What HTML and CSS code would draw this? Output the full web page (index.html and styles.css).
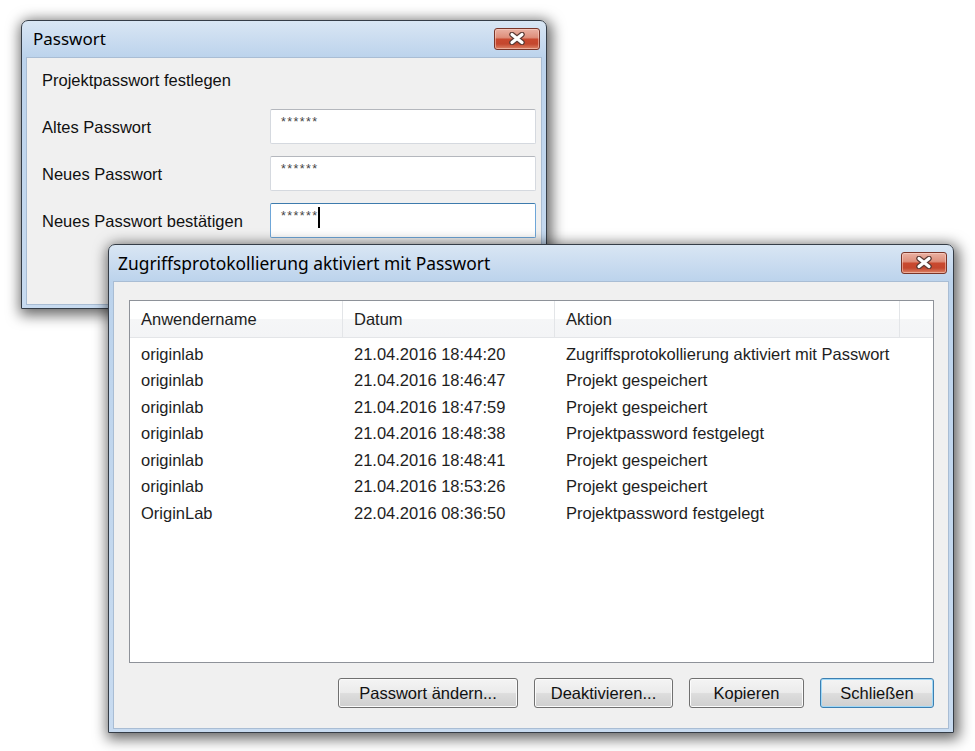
FILE: index.html
```html
<!DOCTYPE html>
<html lang="de">
<head>
<meta charset="utf-8">
<title>Passwort</title>
<link rel="stylesheet" href="styles.css">
</head>
<body>
<div class="desktop">
  <section class="window win-pw">
    <header class="titlebar">
      <span class="title">Passwort</span>
      <button class="close" aria-label="Schließen">
        <svg width="20" height="13" viewBox="0 0 20 13"><path d="M5 2.5 L15 10.5 M15 2.5 L5 10.5" stroke="#5b3a34" stroke-width="5.5" stroke-linecap="round"/><path d="M5 2.5 L15 10.5 M15 2.5 L5 10.5" stroke="#fff" stroke-width="3.2" stroke-linecap="round"/></svg>
      </button>
    </header>
    <div class="client pw-client">
      <p class="heading">Projektpasswort festlegen</p>
      <div class="form">
        <label class="label">Altes Passwort</label>
        <div class="input"><span class="mask">******</span></div>
        <label class="label">Neues Passwort</label>
        <div class="input"><span class="mask">******</span></div>
        <label class="label">Neues Passwort bestätigen</label>
        <div class="input focused"><span class="mask">******</span><span class="caret"></span></div>
      </div>
    </div>
  </section>

  <section class="window win-log">
    <header class="titlebar">
      <span class="title">Zugriffsprotokollierung aktiviert mit Passwort</span>
      <button class="close" aria-label="Schließen">
        <svg width="20" height="13" viewBox="0 0 20 13"><path d="M5 2.5 L15 10.5 M15 2.5 L5 10.5" stroke="#5b3a34" stroke-width="5.5" stroke-linecap="round"/><path d="M5 2.5 L15 10.5 M15 2.5 L5 10.5" stroke="#fff" stroke-width="3.2" stroke-linecap="round"/></svg>
      </button>
    </header>
    <div class="client log-client">
      <div class="list">
        <div class="list-head">
          <div class="hcell">Anwendername</div>
          <div class="hcell">Datum</div>
          <div class="hcell">Aktion</div>
          <div class="hcell filler"></div>
        </div>
        <div class="rows">
          <div class="row"><span>originlab</span><span>21.04.2016 18:44:20</span><span>Zugriffsprotokollierung aktiviert mit Passwort</span></div>
          <div class="row"><span>originlab</span><span>21.04.2016 18:46:47</span><span>Projekt gespeichert</span></div>
          <div class="row"><span>originlab</span><span>21.04.2016 18:47:59</span><span>Projekt gespeichert</span></div>
          <div class="row"><span>originlab</span><span>21.04.2016 18:48:38</span><span>Projektpassword festgelegt</span></div>
          <div class="row"><span>originlab</span><span>21.04.2016 18:48:41</span><span>Projekt gespeichert</span></div>
          <div class="row"><span>originlab</span><span>21.04.2016 18:53:26</span><span>Projekt gespeichert</span></div>
          <div class="row"><span>OriginLab</span><span>22.04.2016 08:36:50</span><span>Projektpassword festgelegt</span></div>
        </div>
      </div>
      <div class="buttons">
        <button class="btn btn-pw">Passwort ändern...</button>
        <button class="btn btn-deak">Deaktivieren...</button>
        <button class="btn btn-copy">Kopieren</button>
        <button class="btn btn-close default">Schließen</button>
      </div>
    </div>
  </section>
</div>
</body>
</html>
```

FILE: styles.css
```css
* { box-sizing: border-box; }
html, body { margin: 0; padding: 0; background: #fff; }
body {
  width: 975px;
  height: 751px;
  overflow: hidden;
  font-family: "Liberation Sans", Arial, sans-serif;
  font-size: 16.5px;
  color: #111;
}
.desktop { position: relative; width: 975px; height: 751px; }

.window {
  position: absolute;
  display: flex;
  flex-direction: column;
  border: 1px solid #353d47;
  border-radius: 7px 7px 0 0;
  background: linear-gradient(#d9e6f4 0, #bcd3ec 36px, #c8dbf0 100%);
  padding: 0 4px 3px;
  box-shadow: 2px 3px 14px 3px rgba(0, 0, 0, 0.6);
}
.win-pw { left: 21px; top: 20px; width: 526px; height: 289px; }
.win-log { left: 108px; top: 244px; width: 846px; height: 489px; }

.titlebar {
  height: 36px;
  flex: none;
  display: flex;
  align-items: center;
  justify-content: space-between;
  padding-left: 7px;
}
.win-log .titlebar { padding-left: 5px; }
.title {
  font-family: "Noto Sans", "Liberation Sans", sans-serif;
  font-size: 17px;
  color: #000;
  margin-top: -1px;
}
.win-log .title { font-size: 17.4px; }
.close {
  width: 46px;
  height: 22px;
  margin-right: 2px;
  margin-top: -1px;
  padding: 0;
  border: 1px solid #7a3528;
  border-radius: 3px;
  background: linear-gradient(#eab1a3 0, #de8f7b 42%, #c9492f 52%, #c4472e 75%, #dc8468 100%);
  box-shadow: inset 0 0 0 1px rgba(255, 220, 210, 0.5);
  display: flex;
  align-items: center;
  justify-content: center;
}

.client {
  flex: 1;
  background: #f0f0f0;
  border: 1px solid #a9bdd4;
}

/* Passwort dialog */
.pw-client { padding: 12px 5px 0 15px; }
.heading { margin: 0 0 19px; line-height: 20px; }
.form {
  display: grid;
  grid-template-columns: 1fr 266px;
  row-gap: 12px;
  align-items: center;
}
.label { line-height: 20px; }
.input {
  height: 35px;
  background: #fff;
  border: 1px solid #d5d9df;
  border-top-color: #b4b7bd;
  border-radius: 2px;
  display: flex;
  align-items: flex-start;
  padding: 5px 10px 0;
}
.input.focused { border-color: #6ea6d8; border-top-color: #3d7bad; padding-top: 3px; }
.mask { font-size: 12.5px; line-height: 14px; letter-spacing: 1.4px; color: #444; }
.input.focused .mask { margin-top: 2px; }
.caret { width: 2px; height: 21px; background: #000; margin-left: -1px; }

/* Log dialog */
.log-client {
  display: flex;
  flex-direction: column;
  padding: 18px 14px 20px 15px;
}
.list {
  flex: 1;
  background: #fff;
  border: 1px solid #8e9299;
  display: flex;
  flex-direction: column;
}
.list-head {
  display: grid;
  grid-template-columns: 213px 212px 345px 1fr;
  height: 37px;
  border-bottom: 1px solid #e3e5e8;
  background: linear-gradient(#ffffff 0, #ffffff 50%, #f5f6f7 50%, #f3f4f6 100%);
  color: #1e1e1e;
}
.hcell {
  border-right: 1px solid #e3e5e8;
  padding-left: 11px;
  display: flex;
  align-items: center;
  padding-top: 1px;
}
.filler { border-right: none; }
.rows { padding-top: 3px; }
.row {
  display: grid;
  grid-template-columns: 213px 212px 345px 1fr;
  height: 26.5px;
  align-items: center;
  color: #1e1e1e;
}
.row span { padding-left: 11px; white-space: nowrap; }

.buttons {
  flex: none;
  display: flex;
  justify-content: flex-end;
  gap: 16px;
  margin-top: 15px;
}
.btn {
  height: 30px;
  padding: 0;
  font-family: "Liberation Sans", Arial, sans-serif;
  font-size: 16.5px;
  color: #111;
  border: 1px solid #707070;
  border-radius: 3px;
  background: linear-gradient(#f4f4f4 0, #ebebeb 48%, #dddddd 52%, #cfcfcf 100%);
  box-shadow: inset 0 0 0 1px #fbfbfb;
}
.btn-pw { width: 180px; }
.btn-deak { width: 139px; }
.btn-copy { width: 115px; }
.btn-close { width: 114px; }
.btn.default {
  border-color: #3c7fb1;
  box-shadow: inset 0 0 0 1px #9fd8f7;
}
```
